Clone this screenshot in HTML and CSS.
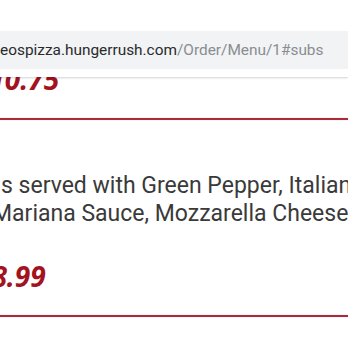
FILE: index.html
```html
<!DOCTYPE html>
<html lang="en">
<head>
<meta charset="utf-8">
<title>Subs</title>
<link rel="stylesheet" href="styles.css">
</head>
<body>
<header class="toolbar">
  <div class="omnibox"><span class="host">eospizza.hungerrush.com</span><span class="path">/Order/Menu/1#subs</span></div>
</header>
<main class="menu">
  <div class="price price-first">$10.75</div>
  <hr class="rule">
  <p class="desc">
    <span class="line line-1">s served with Green Pepper, Italian Sausage,</span>
    <span class="line line-2">Mariana Sauce, Mozzarella Cheese</span>
  </p>
  <div class="price price-second">$8.99</div>
  <hr class="rule">
</main>
</body>
</html>
```
FILE: styles.css
```css
html, body {
  margin: 0;
  padding: 0;
  background: #ffffff;
}
body {
  width: 348px;
  height: 348px;
  overflow: hidden;
  position: relative;
  font-family: Roboto, "Noto Sans", sans-serif;
}
.toolbar {
  position: absolute;
  top: 0;
  left: 0;
  right: 0;
  height: 77px;
  background: #ffffff;
  box-shadow: 0 1px 2px rgba(0, 0, 0, 0.18);
  z-index: 2;
  display: flex;
  flex-direction: column;
  padding-top: 31px;
  box-sizing: border-box;
}
.omnibox {
  height: 38px;
  background: #f1f3f4;
  display: flex;
  align-items: center;
  font-size: 15.4px;
  white-space: nowrap;
  overflow: hidden;
  padding-left: 0;
}
.host { color: #2a2a2c; }
.path { color: #8a8d91; }

.menu {
  padding-top: 63px;
  display: flex;
  flex-direction: column;
}
.price {
  font-family: "Open Sans", "Liberation Sans", sans-serif;
  font-weight: 700;
  font-style: italic;
  font-size: 28px;
  line-height: 32px;
  color: #a3131f;
  white-space: nowrap;
}
.price-first { margin-left: -26px; }
.price-second { margin-left: -24px; margin-top: 32px; }
.rule {
  margin: 23px 0 0 0;
  border: 0;
  height: 2px;
  background: #a92a38;
  box-shadow: 0 0 1px rgba(200, 60, 75, 0.5);
}
.desc {
  margin: 52px 0 0 0;
  font-size: 23px;
  line-height: 28px;
  color: #3a3a3a;
  display: flex;
  flex-direction: column;
  white-space: nowrap;
}
.line-1 { margin-left: 1px; }
.line-2 { margin-left: -8px; }
```
